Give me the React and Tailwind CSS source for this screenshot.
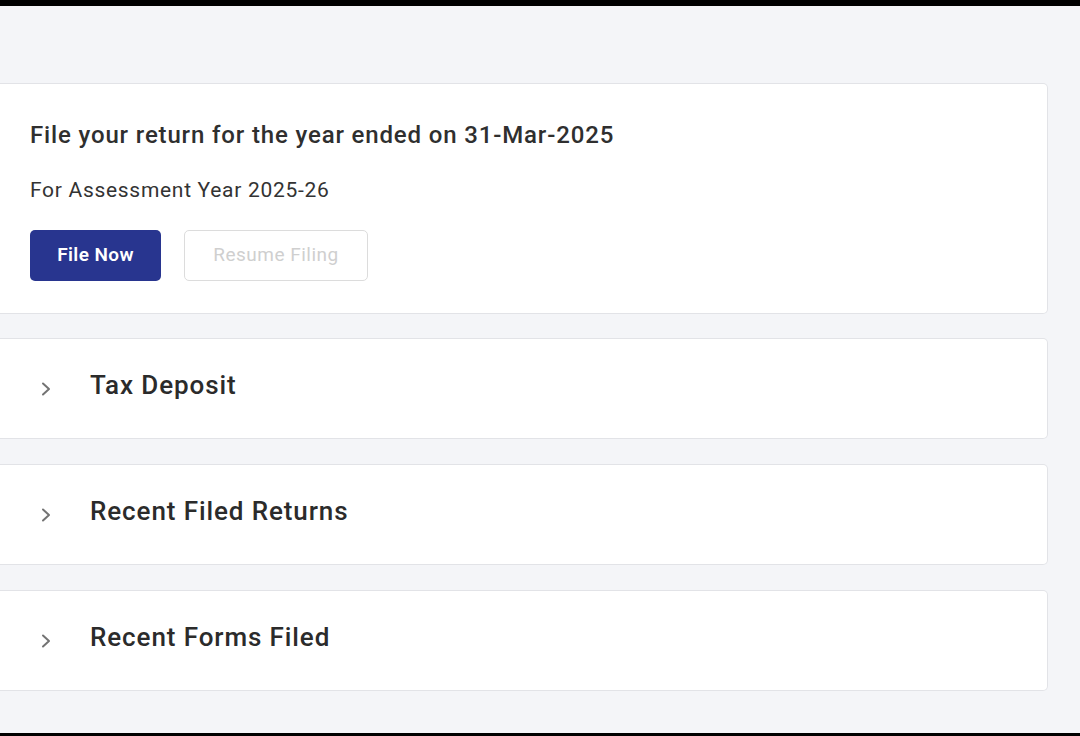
const sections = ["Tax Deposit", "Recent Filed Returns", "Recent Forms Filed"];

function Chevron() {
  return (
    <svg viewBox="0 0 12 14" className="h-[14px] w-[12px]" fill="none" stroke="#737373" strokeWidth="2" strokeLinecap="round" strokeLinejoin="round">
      <polyline points="3,1.5 9,7 3,12.5" />
    </svg>
  );
}

function SectionCard({ title }) {
  return (
    <div className="flex h-[101px] items-center rounded-r-[5px] border border-l-0 border-[#e2e3e7] bg-white">
      <div className="ml-[40px]">
        <Chevron />
      </div>
      <h2 className="ml-[38px] -mt-[6px] text-[26px] font-medium tracking-[0.9px] text-[#2b2b2b]">{title}</h2>
    </div>
  );
}

export default function App() {
  return (
    <div className="flex h-[736px] flex-col bg-[#f4f5f8] font-['Roboto',sans-serif]">
      <div className="h-[6px] bg-black" />
      <main className="flex-1 pr-[32px] pt-[77px]">
        <div className="rounded-r-[5px] border border-l-0 border-[#e2e3e7] bg-white pb-[32px] pl-[30px] pt-[36px]">
          <h1 className="text-[24px] font-medium leading-[30px] tracking-[0.85px] text-[#2f2f2f]">File your return for the year ended on 31-Mar-2025</h1>
          <p className="mt-[26px] text-[21px] leading-[28px] tracking-[0.7px] text-[#333]">For Assessment Year 2025-26</p>
          <div className="mt-[26px] flex gap-[23px]">
            <button className="h-[51px] w-[131px] rounded-[5px] bg-[#28358f] text-[19px] font-semibold tracking-[0.4px] text-white">File Now</button>
            <button className="h-[51px] w-[184px] rounded-[5px] border border-[#dcdcdc] bg-white text-[19px] tracking-[0.5px] text-[#cfcfcf]">Resume Filing</button>
          </div>
        </div>
        <div className="mt-[24px] flex flex-col gap-[25px]">
          {sections.map((s) => (
            <SectionCard key={s} title={s} />
          ))}
        </div>
      </main>
      <div className="h-[3px] bg-black" />
    </div>
  );
}
